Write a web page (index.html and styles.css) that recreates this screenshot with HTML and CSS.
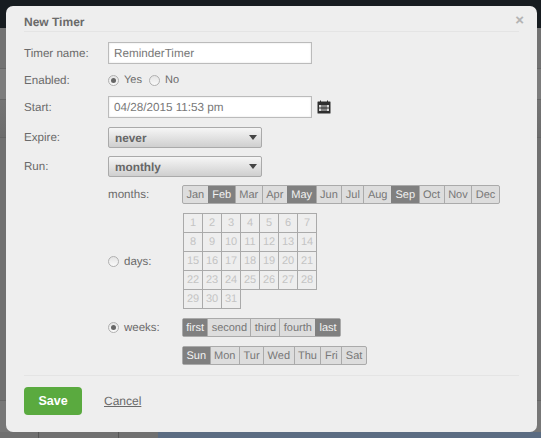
FILE: index.html
```html
<!DOCTYPE html>
<html lang="en">
<head>
<meta charset="utf-8">
<title>New Timer</title>
<link rel="stylesheet" href="styles.css">
</head>
<body>
<div class="backdrop">
  <div class="bd-top"></div>
  <div class="bd-band bd-a"></div>
  <div class="bd-band bd-b"></div>
  <div class="bd-band bd-c"></div>
  <div class="bd-band bd-d"></div>
  <div class="bd-mid"></div>
  <div class="bd-low"></div>
  <div class="bd-bottom"><div class="bd-bottom-left"></div><div class="bd-bottom-right"></div></div>
</div>
<div class="modal">
  <header class="modal-head"><h1>New Timer</h1><span class="close">×</span></header>
  <div class="form">
    <div class="row row-name"><label class="lab">Timer name:</label><div class="input">ReminderTimer</div></div>
    <div class="row row-enabled"><label class="lab">Enabled:</label><span class="radio on"></span><span class="rtext">Yes</span><span class="radio"></span><span class="rtext">No</span></div>
    <div class="row row-start"><label class="lab">Start:</label><div class="input">04/28/2015 11:53 pm</div>
      <svg class="cal" width="14" height="14" viewBox="0 0 14 14"><path fill="#2e2e2e" d="M1 1.500h2V0.500h1v1h6V0.500h1v1h2a.5.5 0 0 1 .5.5v11a.5.5 0 0 1-.5.5H1a.5.5 0 0 1-.5-.5V2a.5.5 0 0 1 .5-.5z"/><path fill="#d8d8d8" d="M2 5h10v6H2z"/><path fill="#2e2e2e" d="M4.500 5h1v6h-1zM6.500 5h1v6h-1zM8.500 5h1v6h-1zM2 7.500h10v1H2z"/></svg>
    </div>
    <div class="row row-expire"><label class="lab">Expire:</label><div class="select">never</div></div>
    <div class="row row-run"><label class="lab">Run:</label><div class="select">monthly</div></div>
    <div class="row row-months indent"><span class="lab sub">months:</span>
      <div class="seg"><span>Jan</span><span class="sel">Feb</span><span>Mar</span><span>Apr</span><span class="sel">May</span><span>Jun</span><span>Jul</span><span>Aug</span><span class="sel">Sep</span><span>Oct</span><span>Nov</span><span>Dec</span></div>
    </div>
    <div class="row row-days indent"><span class="radio"></span><span class="sublab">days:</span>
      <div class="days">
        <span>1</span><span>2</span><span>3</span><span>4</span><span>5</span><span>6</span><span>7</span>
        <span>8</span><span>9</span><span>10</span><span>11</span><span>12</span><span>13</span><span>14</span>
        <span>15</span><span>16</span><span>17</span><span>18</span><span>19</span><span>20</span><span>21</span>
        <span>22</span><span>23</span><span>24</span><span>25</span><span>26</span><span>27</span><span>28</span>
        <span>29</span><span>30</span><span>31</span>
      </div>
    </div>
    <div class="row row-weeks indent"><span class="radio on"></span><span class="sublab">weeks:</span>
      <div class="seg seg-weeks"><span class="sel">first</span><span>second</span><span>third</span><span>fourth</span><span class="sel">last</span></div>
    </div>
    <div class="row row-wdays">
      <div class="seg"><span class="sel">Sun</span><span>Mon</span><span>Tur</span><span>Wed</span><span>Thu</span><span>Fri</span><span>Sat</span></div>
    </div>
  </div>
  <footer class="modal-foot"><button class="save">Save</button><a class="cancel">Cancel</a></footer>
</div>
</body>
</html>
```
FILE: styles.css
```css
* { box-sizing: border-box; }
html, body { margin: 0; height: 100%; overflow: hidden; }
body { width: 541px; height: 438px; position: relative; font-family: "Liberation Sans", Arial, sans-serif; font-size: 12px; color: #6a6a6a; background: #707070; text-rendering: geometricPrecision; }
.backdrop { position: absolute; inset: 0; display: flex; flex-direction: column; }
.bd-top { height: 28px; background: #171c20; }
.bd-band { flex: none; }
.bd-a { height: 40px; background: #727272; }
.bd-b { height: 31px; background: #7c7c7c; border-top: 1px solid #666; }
.bd-c { height: 38px; background: linear-gradient(#747474, #6c6c6c); border-top: 1px solid #666; }
.bd-d { height: 1px; background: #646464; }
.bd-mid { flex: 1; background: #707070; }
.bd-low { height: 32px; background: #777; border-top: 1px solid #666; }
.bd-bottom { height: 6px; display: flex; }
.bd-bottom-left { width: 158px; background: linear-gradient(90deg, #707070 38px, #555 38px, #555 39px, #707070 39px, #707070 118px, #555 118px, #555 119px, #707070 119px); }
.bd-bottom-right { flex: 1; background: #5b6c82; }
.modal { position: absolute; left: 6px; top: 6px; width: 531px; height: 426px; background: #eee; border-radius: 7px; padding: 0 18px; display: flex; flex-direction: column; }
.modal-head { height: 26px; flex: none; border-bottom: 1px solid #e4e4e4; }
.modal-head h1 { margin: 9px 0 0; font-size: 12px; line-height: 14px; font-weight: bold; color: #6a6a6a; }
.close { position: absolute; top: 6px; right: 13px; font-size: 15px; line-height: 18px; font-weight: bold; color: #b4b4b4; }
.form { flex: none; height: 344px; border-bottom: 1px solid #e4e4e4; }
.row { display: flex; align-items: center; }
.indent { padding-left: 84px; }
.lab { width: 84px; flex: none; font-size: 11.600px; color: #6a6a6a; }
.sub { width: 74px; }
.input { width: 204px; height: 22px; background: #fff; border: 1px solid #bbb; box-shadow: inset 0 0 2px #ddd; padding-left: 5px; font-size: 11.700px; line-height: 21px; color: #777; }
.row-name { margin-top: 10px; height: 22px; }
.row-enabled { margin-top: 6px; height: 20px; }
.row-start { margin-top: 6px; height: 22px; }
.row-expire { margin-top: 9px; height: 21px; }
.row-run { margin-top: 8px; height: 21px; }
.row-months { margin-top: 8px; height: 19px; }
.row-days { margin-top: 9px; height: 96px; }
.row-weeks { margin-top: 9px; height: 19px; }
.row-wdays { margin-top: 9px; height: 19px; padding-left: 158px; }
.cal { margin-left: 5px; }
.radio { width: 11px; height: 11px; border-radius: 50%; border: 1px solid #b0b0b0; background: linear-gradient(#e4e4e4, #fafafa); margin-right: 5px; flex: none; position: relative; }
.radio.on::after { content: ""; position: absolute; left: 2px; top: 2px; width: 5px; height: 5px; border-radius: 50%; background: #666; }
.rtext { font-size: 11px; margin-right: 7px; color: #6a6a6a; }
.sublab { width: 58px; flex: none; padding-top: 1px; font-size: 11.500px; color: #6a6a6a; }
.select { width: 154px; height: 21px; border: 1px solid #aaa; border-radius: 2px; background: linear-gradient(#f6f6f6, #cfcfcf); padding-left: 6px; font-weight: bold; font-size: 11.800px; line-height: 20px; color: #666; position: relative; }
.select::after { content: ""; position: absolute; right: 4px; top: 7px; border: 4px solid transparent; border-top: 5px solid #444; border-bottom: 0; }
.seg { display: flex; height: 19px; border: 1px solid #aaa; border-radius: 2px; background: #ddd; }
.seg span { font-size: 11px; line-height: 18px; padding: 0 3.500px; color: #777; border-left: 1px solid #aaa; }
.seg-weeks span { padding: 0 3.300px; }
.seg span:first-child { border-left: 0; }
.seg .sel { background: #808080; color: #f2f2f2; border-left-color: #808080; }
.days { display: grid; grid-template-columns: repeat(7, 19px); grid-auto-rows: 19px; margin-left: 1px; width: 134px; height: 96px; border-top: 1px solid #aaa; border-left: 1px solid #aaa; }
.days span { border-right: 1px solid #aaa; border-bottom: 1px solid #aaa; font-size: 11px; line-height: 19px; text-align: center; color: #c4c4c4; }
.modal-foot { display: flex; align-items: flex-start; padding-top: 11px; }
.save { width: 58px; height: 28px; border: 0; border-radius: 4px; background: #5aaa3f; color: #fff; font: bold 12.500px "Liberation Sans", Arial, sans-serif; padding: 0; }
.cancel { margin-left: 22px; margin-top: 6px; font-size: 12px; line-height: 16px; color: #6a6a6a; text-decoration: underline; }
```
